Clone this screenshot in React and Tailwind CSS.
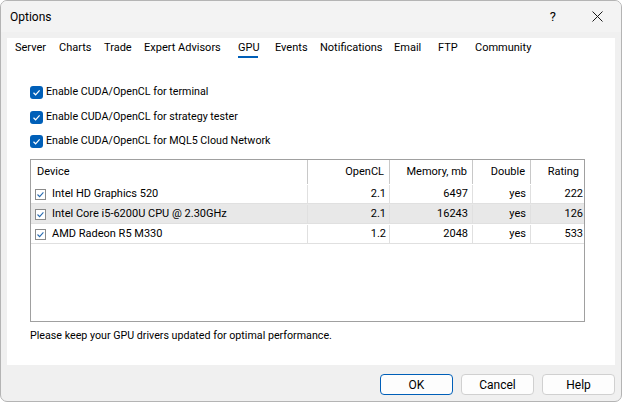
import React from "react";

const tabs = [
  { name: "Server", w: "w-[44px]" },
  { name: "Charts", w: "w-[45px]" },
  { name: "Trade", w: "w-[40px]" },
  { name: "Expert Advisors", w: "w-[94px]" },
  { name: "GPU", w: "w-[37px]", active: true },
  { name: "Events", w: "w-[45px]" },
  { name: "Notifications", w: "w-[74px]" },
  { name: "Email", w: "w-[44px]" },
  { name: "FTP", w: "w-[37px]" },
  { name: "Community", w: "w-[80px]" },
];

const devices = [
  { name: "Intel HD Graphics 520", cl: "2.1", mem: "6497", dbl: "yes", rating: "222" },
  { name: "Intel Core i5-6200U CPU @ 2.30GHz", cl: "2.1", mem: "16243", dbl: "yes", rating: "126", selected: true },
  { name: "AMD Radeon R5 M330", cl: "1.2", mem: "2048", dbl: "yes", rating: "533" },
];

const BlueCheck = () => (
  <span className="w-[13px] h-[13px] rounded-[3px] bg-[#005fb8] flex items-center justify-center shrink-0">
    <svg width="9" height="9" viewBox="0 0 9 9">
      <path d="M1.5 4.8 L3.6 6.8 L7.6 2.4" fill="none" stroke="white" strokeWidth="1.2" />
    </svg>
  </span>
);

const SmallCheck = () => (
  <span className="w-[11px] h-[11px] border border-[#8a8a8a] bg-white flex items-center justify-center shrink-0">
    <svg width="9" height="9" viewBox="0 0 9 9">
      <path d="M1.5 4.5 L3.6 6.6 L7.4 2.4" fill="none" stroke="#2b6cb0" strokeWidth="1.1" />
    </svg>
  </span>
);

const cols = "grid grid-cols-[277px_82px_83px_58px_53px]";

export default function App() {
  return (
    <div className="w-[622px] h-[402px] bg-[#f0f0f0] border border-[#b4b4b4] rounded-[7px] overflow-hidden flex flex-col text-[11px] text-black font-['Roboto','Noto_Sans',sans-serif]">
      {/* title bar */}
      <div className="h-[31px] bg-[#f3f3f3] flex items-center pl-[9px] shrink-0">
        <span className="text-[12px]">Options</span>
        <span className="ml-auto text-[13px] mr-[36px]">?</span>
        <svg width="11" height="11" viewBox="0 0 11 11" className="mr-[18px]">
          <path d="M0.5 0.5 L10.5 10.5 M10.5 0.5 L0.5 10.5" stroke="#1a1a1a" strokeWidth="1" />
        </svg>
      </div>

      <div className="h-[6px] shrink-0" />

      {/* white panel */}
      <div className="mx-[6px] h-[327px] bg-white flex flex-col shrink-0">
        <div className="h-[21px] flex pl-[8px]">
          {tabs.map((t) => (
            <div key={t.name} className={`${t.w} relative h-full flex items-center shrink-0`}>
              <span>{t.name}</span>
              {t.active && <span className="absolute left-0 bottom-[1px] w-[20px] h-[2px] bg-[#005fb8]" />}
            </div>
          ))}
        </div>

        <div className="mt-[27px] pl-[23px] flex flex-col gap-[11.5px] text-[10.7px]">
          {["Enable CUDA/OpenCL for terminal", "Enable CUDA/OpenCL for strategy tester", "Enable CUDA/OpenCL for MQL5 Cloud Network"].map((l) => (
            <div key={l} className="h-[13px] flex items-center gap-[3px]">
              <BlueCheck />
              <span>{l}</span>
            </div>
          ))}
        </div>

        {/* device table */}
        <div className="mt-[11px] ml-[23px] w-[555px] h-[163px] border border-[#a0a0a0] shrink-0">
          <div className={`${cols} h-[24px]`}>
            <div className="border-r border-[#c8c8c8] pl-[6px] flex items-center">Device</div>
            <div className="border-r border-[#c8c8c8] pr-[5px] flex items-center justify-end">OpenCL</div>
            <div className="border-r border-[#c8c8c8] pr-[5px] flex items-center justify-end">Memory, mb</div>
            <div className="border-r border-[#c8c8c8] pr-[5px] flex items-center justify-end">Double</div>
            <div className="pr-[5px] flex items-center justify-end">Rating</div>
          </div>
          {devices.map((d) => (
            <div key={d.name} className={`${cols} h-[20px] border-b border-[#e0e0e0] pt-[1px] ${d.selected ? "bg-[#e8e8e8]" : ""}`}>
              <div className="border-r border-[#e0e0e0] pl-[4px] flex items-center gap-[6px]">
                <SmallCheck />
                <span>{d.name}</span>
              </div>
              <div className="border-r border-[#e0e0e0] pr-[3px] flex items-center justify-end">{d.cl}</div>
              <div className="border-r border-[#e0e0e0] pr-[4px] flex items-center justify-end">{d.mem}</div>
              <div className="border-r border-[#e0e0e0] pr-[4px] flex items-center justify-end">{d.dbl}</div>
              <div className="pr-[1px] flex items-center justify-end">{d.rating}</div>
            </div>
          ))}
        </div>

        <div className="mt-[6px] pl-[23px] h-[16px] flex items-center text-[10.7px]">
          Please keep your GPU drivers updated for optimal performance.
        </div>
      </div>

      {/* buttons */}
      <div className="mt-[9px] flex justify-end gap-[8px] pr-[6px]">
        <button className="w-[73px] h-[21px] rounded-[4px] border border-[#005fb8] bg-[#fdfdfd] text-[12px]">OK</button>
        <button className="w-[73px] h-[21px] rounded-[4px] border border-[#d0d0d0] bg-[#fdfdfd] text-[12px]">Cancel</button>
        <button className="w-[73px] h-[21px] rounded-[4px] border border-[#d0d0d0] bg-[#fdfdfd] text-[12px]">Help</button>
      </div>
    </div>
  );
}
